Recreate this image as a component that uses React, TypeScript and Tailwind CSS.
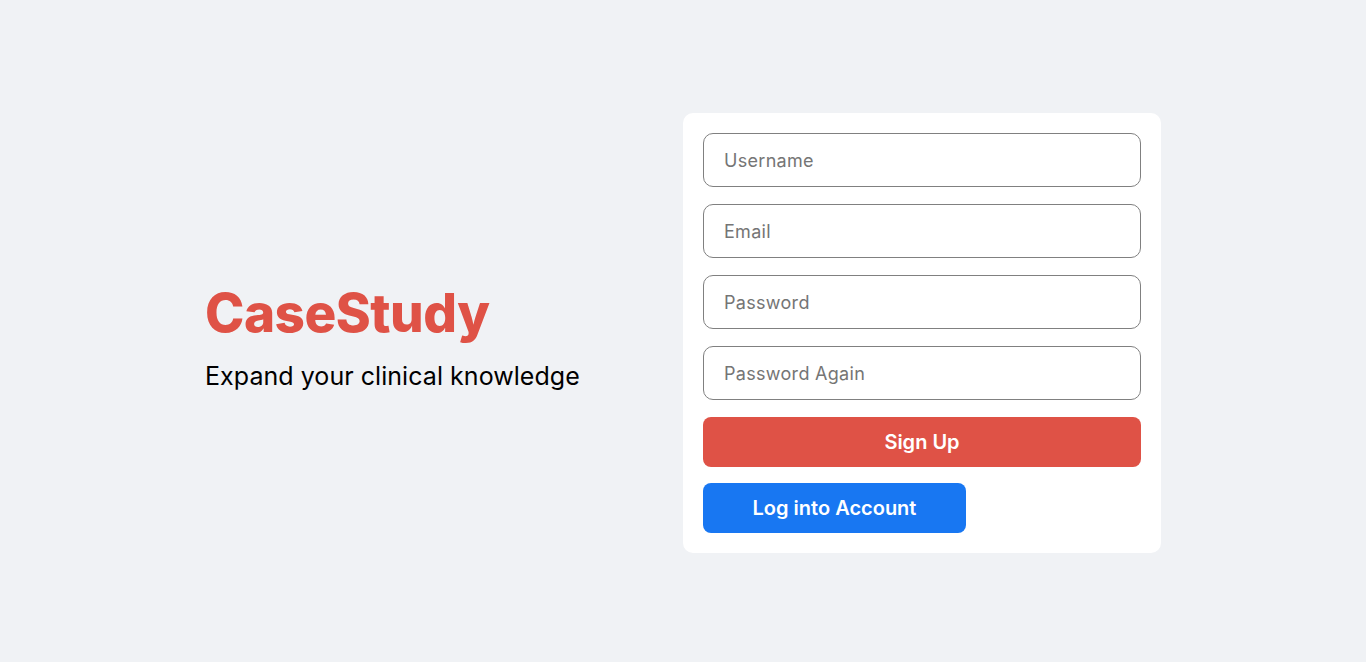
export default function App() {
  const fields = ['Username', 'Email', 'Password', 'Password Again'];

  return (
    <div className="min-h-screen w-full bg-[#f0f2f5] flex items-center justify-center font-['Inter',sans-serif] pt-[4px]">
      <div className="w-[956px] flex items-center">
        {/* Brand */}
        <div className="w-[478px] flex flex-col pt-[8px]">
          <h1 className="text-[#df5246] text-[53px] font-extrabold leading-[60px] tracking-[-0.5px]">CaseStudy</h1>
          <p className="mt-[18px] text-[25px] leading-[30px] text-black tracking-[0.05px]">Expand your clinical knowledge</p>
        </div>

        {/* Sign up card */}
        <div className="w-[478px] bg-white rounded-[10px] p-5 flex flex-col">
          {fields.map((f) => (
            <input
              key={f}
              type={f.startsWith('Password') ? 'password' : 'text'}
              placeholder={f}
              className="h-[54px] w-full mb-[17px] rounded-[10px] border border-[#808080] px-5 text-[18px] tracking-[0.3px] text-black placeholder:text-[#757575] outline-none"
            />
          ))}
          <button className="h-[50px] w-full rounded-[8px] bg-[#df5246] text-white text-[20px] font-semibold">
            Sign Up
          </button>
          <button className="mt-4 h-[50px] w-[263px] rounded-[8px] bg-[#1877f2] text-white text-[20px] font-semibold">
            Log into Account
          </button>
        </div>
      </div>
    </div>
  );
}
